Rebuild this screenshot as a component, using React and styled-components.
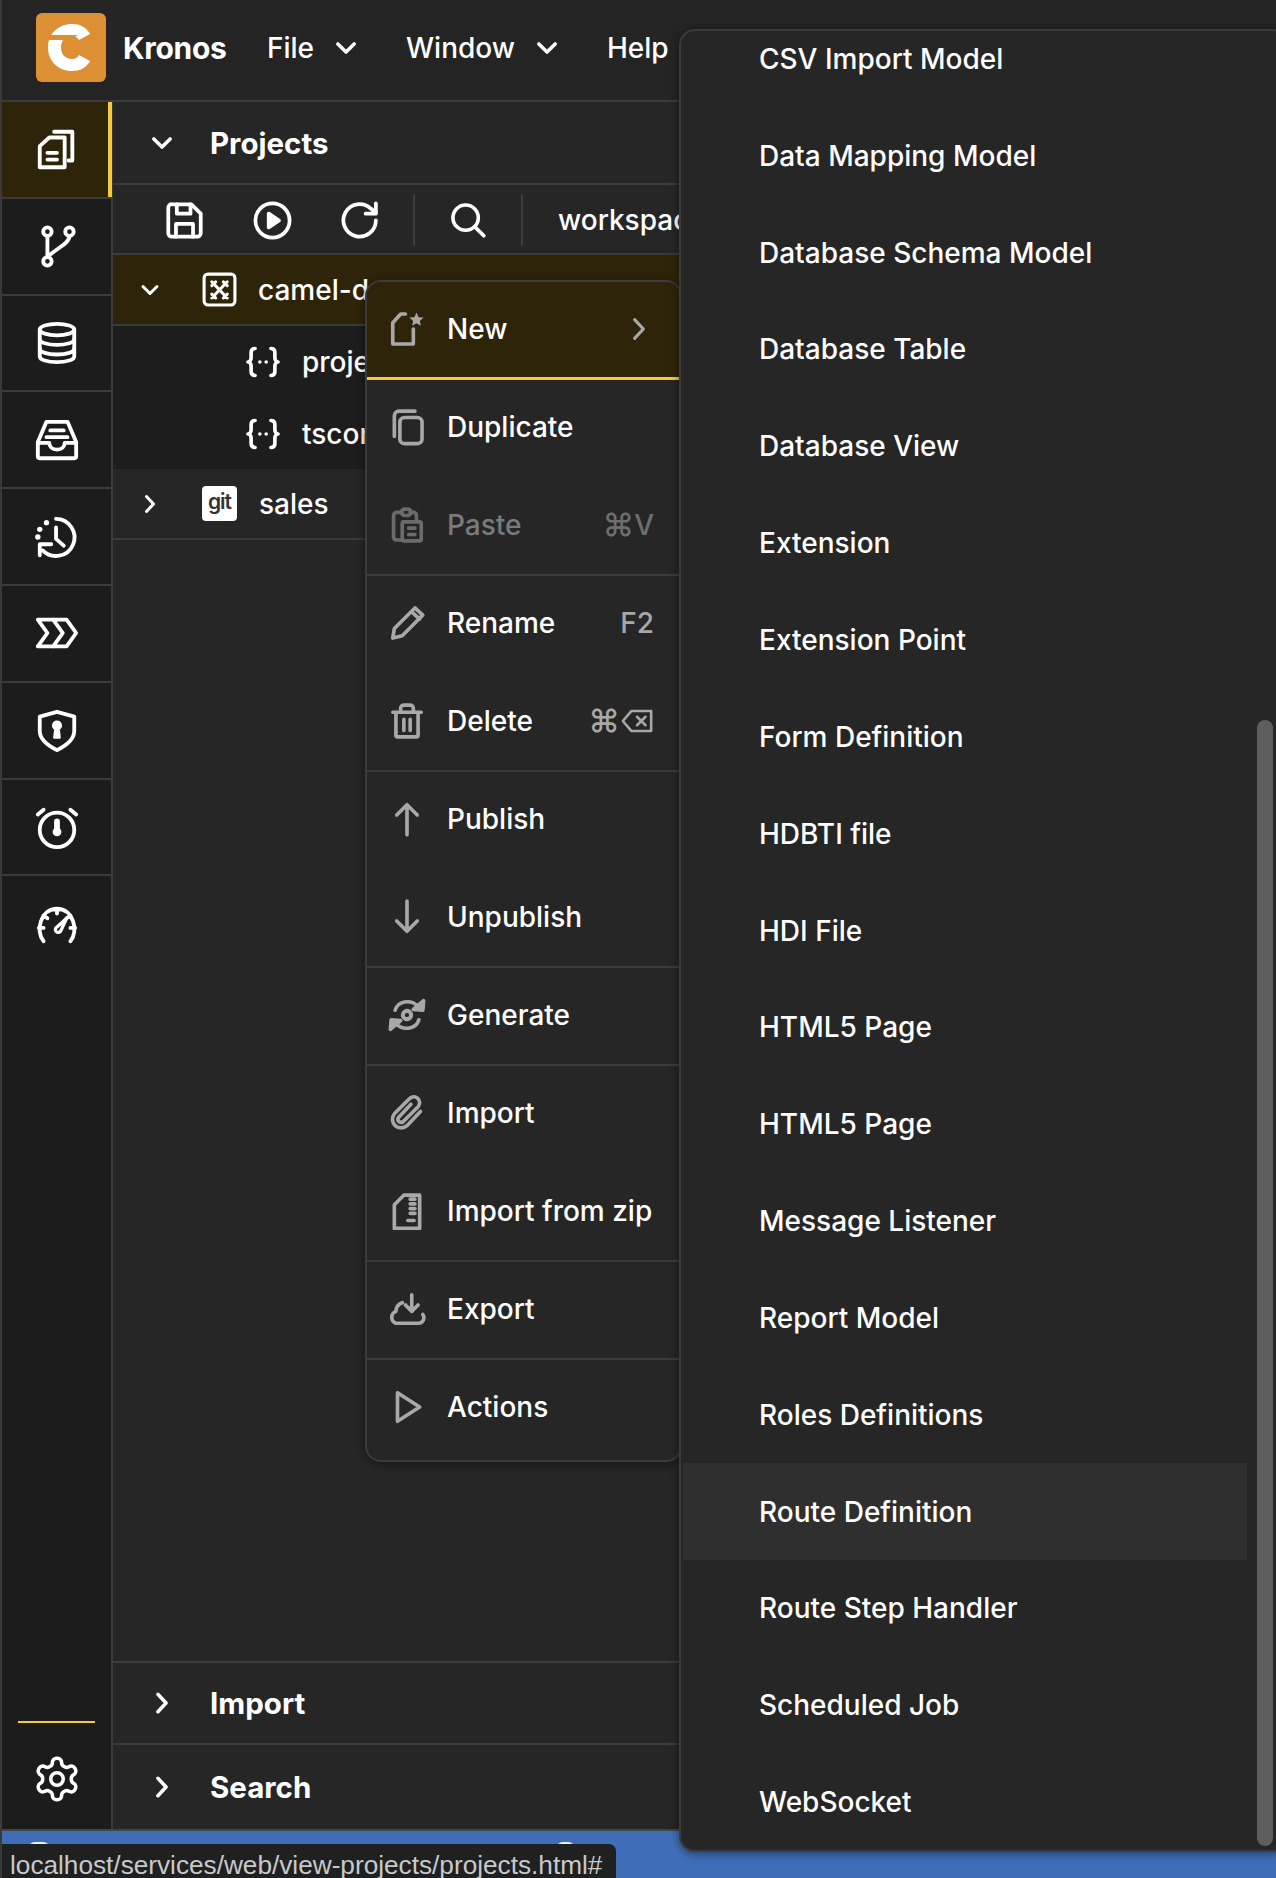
import React from 'react';
import styled, { createGlobalStyle } from 'styled-components';

const Global = createGlobalStyle`
  html, body { margin: 0; padding: 0; background: #262626; }
  * { box-sizing: border-box; }
`;

const FONT = `Inter, "Noto Sans", sans-serif`;
const BORDER = '#3b3b3b';
const YELLOW = '#f6c93f';
const ACTIVE = '#2e2409';

const Page = styled.div`
  position: relative;
  width: 1276px;
  height: 1878px;
  overflow: hidden;
  display: flex;
  flex-direction: column;
  background: #262626;
  color: #fff;
  font-family: ${FONT};
  font-size: 28px;
  font-weight: 500;
  border-left: 2px solid #3a3a3a;
`;
const Header = styled.header`
  height: 102px;
  flex: none;
  display: flex;
  align-items: center;
  padding: 0 0 5px 34px;
  background: #242424;
  border-bottom: 2px solid ${BORDER};
`;
const Logo = styled.svg`
  width: 70px;
  height: 69px;
  flex: none;
  margin-right: 17px;
`;
const Brand = styled.span`
  font-weight: 700;
  font-size: 30px;
  letter-spacing: -0.3px;
  width: 144px;
`;
const MenuLabel = styled.span`
  display: flex;
  align-items: center;
  width: ${p => p.$w}px;
  gap: ${p => p.$gap}px;
`;
const Body = styled.div`
  flex: 1;
  min-height: 0;
  display: flex;
`;
const Sidebar = styled.nav`
  width: 111px;
  flex: none;
  display: flex;
  flex-direction: column;
  background: #1c1c1c;
  border-right: 2px solid ${BORDER};
`;
const SideItem = styled.div`
  height: 96.8px;
  flex: none;
  display: flex;
  align-items: center;
  justify-content: center;
  border-bottom: ${p => (p.$last ? 'none' : `2px solid ${BORDER}`)};
  background: ${p => (p.$active ? ACTIVE : 'transparent')};
  box-shadow: ${p => (p.$active ? `inset -4px 0 0 ${YELLOW}` : 'none')};
  margin-right: ${p => (p.$active ? '-1px' : '0')};
`;
const SideSpacer = styled.div`
  flex: 1;
`;
const SideRule = styled.div`
  height: 2px;
  margin: 0 16px;
  background: ${YELLOW};
`;
const SideBottom = styled.div`
  height: 106px;
  flex: none;
  display: flex;
  align-items: center;
  justify-content: center;
  padding-top: 6px;
`;
const Panel = styled.main`
  flex: 1;
  min-width: 0;
  display: flex;
  flex-direction: column;
  background: #262626;
`;
const SectionHead = styled.div`
  height: ${p => p.$h}px;
  flex: none;
  display: flex;
  align-items: center;
  gap: 34px;
  padding-left: 35px;
  border-bottom: ${p => (p.$last ? 'none' : `2px solid ${BORDER}`)};
  border-top: ${p => (p.$first ? `2px solid ${BORDER}` : 'none')};
  font-weight: 700;
  font-size: 29.5px;
`;
const Toolbar = styled.div`
  height: 70px;
  flex: none;
  display: flex;
  align-items: center;
  padding: 2px 0 0 51px;
  border-bottom: 2px solid ${BORDER};
  white-space: nowrap;
  overflow: hidden;
`;
const ToolBtn = styled.span`
  display: flex;
  width: 40px;
  justify-content: center;
  margin-right: ${p => p.$mr || 48}px;
`;
const ToolDivider = styled.span`
  width: 2px;
  height: 52px;
  background: ${BORDER};
  margin-right: ${p => p.$mr}px;
`;
const Tree = styled.div`
  flex: 1;
  min-height: 0;
`;
const TreeRow = styled.div`
  height: ${p => p.$h}px;
  display: flex;
  align-items: center;
  padding-left: ${p => p.$pad}px;
  background: ${p => p.$bg};
  border-bottom: ${p => (p.$line ? `2px solid ${BORDER}` : 'none')};
  white-space: nowrap;
`;
const TreeChevron = styled.span`
  display: flex;
  width: 24px;
  justify-content: center;
  margin-right: 40px;
`;
const TreeIconBox = styled.span`
  display: flex;
  width: 34px;
  height: 34px;
  align-items: center;
  justify-content: center;
  margin-right: ${p => p.$mr || 22}px;
  flex: none;
`;
const GitBadge = styled.span`
  display: flex;
  width: 35px;
  height: 35px;
  border-radius: 4px;
  align-items: center;
  justify-content: center;
  background: #fff;
  color: #333;
  font-size: 21px;
  font-weight: 600;
  letter-spacing: -1px;
  margin-right: 22px;
  line-height: 1;
  padding-bottom: 4px;
`;
const Footer = styled.div`
  height: 49px;
  flex: none;
  display: flex;
  padding: 11px 0 0 26px;
  gap: 506px;
  background: #3f6eb9;
  border-top: 2px solid #444;
`;
const StatusDot = styled.span`
  width: ${p => p.$w}px;
  height: 14px;
  border-radius: 7px;
  background: #f0f0f0;
`;
const Tooltip = styled.div`
  position: absolute;
  left: -2px;
  bottom: 0;
  width: 616px;
  height: 34px;
  padding-left: 10px;
  background: #1e2022;
  border-top-right-radius: 7px;
  color: #c9c9c9;
  font-family: "Liberation Sans", sans-serif;
  font-size: 26.2px;
  font-weight: 400;
  line-height: 42px;
  white-space: nowrap;
`;
const ContextMenu = styled.div`
  position: absolute;
  left: 363px;
  top: 280px;
  width: 317px;
  height: 1182px;
  display: flex;
  flex-direction: column;
  background: #262626;
  border: 2px solid ${BORDER};
  border-radius: 16px;
  overflow: hidden;
  box-shadow: 0 2px 10px rgba(0, 0, 0, 0.45);
  z-index: 2;
`;
const MenuRow = styled.div`
  height: 98px;
  flex: none;
  display: flex;
  align-items: center;
  padding: 0 26px 2px 20px;
  background: ${p => (p.$active ? ACTIVE : 'transparent')};
  border-bottom: ${p =>
    p.$active ? `3px solid ${YELLOW}` : p.$sep ? `2px solid ${BORDER}` : '2px solid transparent'};
  color: ${p => (p.$muted ? '#7a7a7a' : '#fff')};
  white-space: nowrap;
`;
const MenuIcon = styled.span`
  display: flex;
  width: 40px;
  justify-content: center;
  margin-right: 20px;
  flex: none;
`;
const Shortcut = styled.span`
  margin-left: auto;
  display: flex;
  align-items: center;
  color: ${p => (p.$muted ? '#6e6e6e' : '#a8a8a8')};
`;
const CmdGlyph = styled.span`
  font-size: 32px;
  line-height: 1;
`;
const SubMenu = styled.div`
  position: absolute;
  left: 677px;
  top: 29px;
  width: 610px;
  height: 1823px;
  background: #262626;
  border: 2px solid ${BORDER};
  border-radius: 16px;
  overflow: hidden;
  box-shadow: 0 2px 10px rgba(0, 0, 0, 0.45);
  z-index: 3;
`;
const SubList = styled.div`
  margin: -20.5px 0 0 2px;
  width: 564px;
`;
const SubRow = styled.div`
  height: 96.85px;
  display: flex;
  align-items: center;
  padding-left: 76px;
  background: ${p => (p.$hover ? '#2f2f2f' : 'transparent')};
`;
const ScrollThumb = styled.div`
  position: absolute;
  left: 576px;
  top: 689px;
  width: 16px;
  height: 1126px;
  border-radius: 8px;
  background: #5e5e5e;
`;
const Svg = styled.svg`
  display: block;
  flex: none;
  fill: none;
  stroke: currentColor;
  stroke-width: ${p => p.$sw || 2};
  stroke-linecap: round;
  stroke-linejoin: round;
  color: ${p => p.$color || '#fff'};
`;

const Icon = ({ size = 46, color, sw, vb = '0 0 24 24', children }) => (
  <Svg width={size} height={size} viewBox={vb} $color={color} $sw={sw}>{children}</Svg>
);
const ChevDown = ({ size = 28, sw = 3 }) => <Icon size={size} sw={sw}><path d="M5 8.500l7 7 7-7" /></Icon>;
const ChevRight = ({ size = 28, sw = 3, color }) => <Icon size={size} sw={sw} color={color}><path d="M8.500 4.500l7 7.500-7 7.500" /></Icon>;

const IcFiles = () => <Icon><path d="M10.500 3H20V18H18" /><path d="M3 10.500L8 6H16V21.500H3z" /><path d="M7 14h5M7 17.500h5" /></Icon>;
const IcBranch = () => <Icon><circle cx="7" cy="4.500" r="2.200" /><circle cx="7" cy="20" r="2.200" /><circle cx="18.500" cy="4.500" r="2.200" /><path d="M7 6.700v11M18.500 6.700c0 4-6 6-11.500 11" /></Icon>;
const IcDb = () => <Icon sw={2}><ellipse cx="12" cy="5" rx="9" ry="3" /><path d="M3 5v14c0 1.700 4 3 9 3s9-1.300 9-3V5" /><path d="M3 10c0 1.700 4 3 9 3s9-1.300 9-3M3 15c0 1.700 4 3 9 3s9-1.300 9-3" /></Icon>;
const IcInbox = () => <Icon sw={2}><path d="M6.500 2.500h11L22 13v7.500a1 1 0 0 1-1 1H3a1 1 0 0 1-1-1V13z" /><path d="M2 13.500H8c0 2 1.500 3.500 4 3.500s4-1.500 4-3.500h6M8.500 7h7M6.500 10.500h11" /></Icon>;
const IcHistory = () => <Icon><path d="M11.500 2.500a9.700 9.700 0 1 1-7 16.500" /><path d="M11.500 7v6l4 3.500M3 21.500v-5.700h6" /><path d="M6.500 4.500h.01M3 8h.01M2 12h.01" strokeWidth="2.800" /></Icon>;
const IcChevrons = () => <Icon><path d="M2 5h15l5 7-5 7H2l5-7zM10 5l5 7-5 7" /></Icon>;
const IcShield = () => <Icon><path d="M12 2.500L21 5v7.500c0 4.500-4 7.500-9 10-5-2.500-9-5.500-9-10V5z" /><path d="M12 7.500a2.200 2.200 0 0 1 1 4.100l.5 4.400h-3l.5-4.400a2.200 2.200 0 0 1 1-4.100z" fill="#fff" strokeWidth="1" /></Icon>;
const IcAlarm = () => <Icon><circle cx="12" cy="13.500" r="9" /><path d="M2 5.500L5 3M22 5.500L19 3" /><path d="M12 9v5" strokeWidth="3" /><circle cx="12" cy="14.500" r="1.300" fill="#fff" /></Icon>;
const IcGauge = () => <Icon><path d="M5 20.500C.5 15 3.500 3.500 12 3.500s11.500 11.500 7 17M12 3.500V6M5 7l2 1.500M19 7l-2 1.500M2.500 13.500H5M21.500 13.500H19" /><path d="M17 8.500l-5 4.500a1.500 1.500 0 1 0 2 2z" strokeWidth="1.700" /></Icon>;
const IcGear = () => <Icon size={50} sw={1.700}><path d="M12.220 2h-.44a2 2 0 0 0-2 2v.180a2 2 0 0 1-1 1.730l-.430.250a2 2 0 0 1-2 0l-.150-.080a2 2 0 0 0-2.730.730l-.220.380a2 2 0 0 0 .730 2.730l.150.100a2 2 0 0 1 1 1.720v.510a2 2 0 0 1-1 1.740l-.150.090a2 2 0 0 0-.730 2.730l.220.380a2 2 0 0 0 2.730.730l.150-.080a2 2 0 0 1 2 0l.430.250a2 2 0 0 1 1 1.730V20a2 2 0 0 0 2 2h.440a2 2 0 0 0 2-2v-.180a2 2 0 0 1 1-1.730l.430-.250a2 2 0 0 1 2 0l.150.080a2 2 0 0 0 2.730-.730l.220-.390a2 2 0 0 0-.730-2.730l-.150-.080a2 2 0 0 1-1-1.740v-.500a2 2 0 0 1 1-1.740l.150-.090a2 2 0 0 0 .730-2.730l-.220-.380a2 2 0 0 0-2.730-.730l-.150.080a2 2 0 0 1-2 0l-.430-.250a2 2 0 0 1-1-1.730V4a2 2 0 0 0-2-2z" /><circle cx="12" cy="12" r="3" /></Icon>;
const IcSave = () => <Icon size={41} sw={2.200}><path d="M5 2.500h11L21.500 8v11.500a2 2 0 0 1-2 2h-15a2 2 0 0 1-2-2v-15a2 2 0 0 1 2.500-2z" /><path d="M7.500 2.500V8h8V2.500M7 21.500V14h10v7.500" /></Icon>;
const IcPlay = () => <Icon size={41} sw={2.200}><circle cx="12" cy="12" r="10" /><path d="M9.800 8l6 4-6 4z" fill="#fff" /></Icon>;
const IcRefresh = () => <Icon size={41} sw={2.200}><path d="M21 12a9.500 9.500 0 1 1-3-7l3 2.500" /><path d="M21 2v6h-6" /></Icon>;
const IcSearch = () => <Icon size={38} sw={2.300}><circle cx="10.500" cy="10.500" r="8" /><path d="M16.500 16.500L22 22" /></Icon>;
const IcCamel = () => <Icon size={37} sw={2}><rect x="2" y="2" width="20" height="20" rx="2.500" /><path d="M7 7l10 10.500M17 7L7 17.500M7 9.500l2.500-2.500M14.500 17.500l2.500-2.500M14.500 7L17 9.500M7 15l2.500 2.500" /></Icon>;
const IcJson = () => <Icon size={38} sw={2.300}><path d="M7 3.500c-2 0-2.500 1-2.500 2.500v3.500c0 1.500-1 2.500-2 2.500 1 0 2 1 2 2.500V18c0 1.500.5 2.500 2.500 2.500M17 3.500c2 0 2.500 1 2.500 2.500v3.500c0 1.500 1 2.500 2 2.500-1 0-2 1-2 2.500V18c0 1.500-.5 2.500-2.500 2.500M10 12h.01M14 12h.01" /></Icon>;

const G = '#a8a8a8';
const M = ({ children, color = G, sw = 2.300 }) => <Icon size={38} color={color} sw={sw}>{children}</Icon>;
const menuIcons = {
  new: <M><path d="M11 2.500H8L3 8v13.500h13V12" /><path d="M18 1.500l1.300 3 3.200.300-2.400 2.100.700 3.100-2.800-1.700-2.800 1.700.700-3.100-2.400-2.100 3.200-.300z" fill={G} stroke="none" /></M>,
  dup: <M><path d="M4 18V5a3 3 0 0 1 3-3h10" /><rect x="7.500" y="6" width="14" height="16.500" rx="3" /></M>,
  paste: <M color="#6b6b6b"><path d="M9 4H5.500a2 2 0 0 0-2 2v14a2 2 0 0 0 2 1.500H8M18 9V6a2 2 0 0 0-2-2h-2" /><rect x="8.500" y="2" width="6" height="4" rx="2" /><rect x="9" y="10" width="12" height="12" rx="1" /><path d="M13 14h4M13 18h4" /></M>,
  rename: <M><path d="M3 21.500l1-6L17 2.500 22 7 9 20z" /><path d="M15 5l5 4.500" /></M>,
  del: <M><path d="M3 6.500h18M8 6.500V4a2 2 0 0 1 2-2h4a2 2 0 0 1 2 2v2.500M5 6.500V21a1 1 0 0 0 1 1h12a1 1 0 0 0 1-1V6.500M10 11v7M14 11v7" /></M>,
  up: <M><path d="M12 22V3M5.500 9.500L12 3l6.500 6.500" /></M>,
  down: <M><path d="M12 2v19M5.500 14.500L12 21l6.500-6.500" /></M>,
  gen: <M><path d="M4.500 9C6 3.500 14 1.500 19 6.500M19.500 15c-1.500 5.500-9.500 7.500-14.500 2.500" /><path d="M22.500 3l-.5 6-6-.5zM1.500 21l.5-6 6 .5z" fill={G} /><circle cx="12" cy="12" r="2.600" fill="none" strokeWidth="2.600" strokeDasharray="2 .8" /></M>,
  imp: <M><path d="M20.500 11l-8.500 9a5.500 5.500 0 0 1-8-7.500L13.500 3a3.700 3.700 0 0 1 5.500 5L9.500 17.500a2 2 0 0 1-3-2.500l8-8.500" /></M>,
  zip: <M><path d="M10 2h10v21H4V8z" /><path d="M14 4.500h3M14 7.500h3M14 10.500h3M14 13.500h3M12.500 18h4" /></M>,
  exp: <M><path d="M9 8a6 6 0 0 0-4 5.500A4 4 0 0 0 5 21h14a3.500 3.500 0 0 0 3-5.500" /><path d="M15 3v10M11 9.500l4 4 4-4" /></M>,
  act: <M><path d="M6 3l14 9-14 9z" /></M>,
};

const sideIcons = [<IcFiles />, <IcBranch />, <IcDb />, <IcInbox />, <IcHistory />, <IcChevrons />, <IcShield />, <IcAlarm />, <IcGauge />];

const menuItems = [
  { k: 'new', t: 'New', active: true },
  { k: 'dup', t: 'Duplicate' },
  { k: 'paste', t: 'Paste', muted: true, sc: 'paste', sep: true },
  { k: 'rename', t: 'Rename', sc: 'F2' },
  { k: 'del', t: 'Delete', sc: 'del', sep: true },
  { k: 'up', t: 'Publish' },
  { k: 'down', t: 'Unpublish', sep: true },
  { k: 'gen', t: 'Generate', sep: true },
  { k: 'imp', t: 'Import' },
  { k: 'zip', t: 'Import from zip', sep: true },
  { k: 'exp', t: 'Export', sep: true },
  { k: 'act', t: 'Actions' },
];

const subItems = ['CSV Import Model', 'Data Mapping Model', 'Database Schema Model', 'Database Table', 'Database View', 'Extension', 'Extension Point', 'Form Definition', 'HDBTI file', 'HDI File', 'HTML5 Page', 'HTML5 Page', 'Message Listener', 'Report Model', 'Roles Definitions', 'Route Definition', 'Route Step Handler', 'Scheduled Job', 'WebSocket'];

const shortcutContent = sc => {
  if (sc === 'paste') return <><CmdGlyph>⌘</CmdGlyph>V</>;
  if (sc === 'del') {
    return (
      <>
        <CmdGlyph>⌘</CmdGlyph>
        <Icon size={34} color={G} sw={1.800}><path d="M8 5h14v14H8l-6-7zM12 9l6 6M18 9l-6 6" /></Icon>
      </>
    );
  }
  return sc;
};

export default function App() {
  return (
    <Page>
      <Global />
      <Header>
        <Logo viewBox="0 0 70 69">
          <rect width="70" height="69" rx="6" fill="#dc8f33" />
          <path d="M54 21 C 50 14 44 11 36 11 C 22 11 12 21 12 34.500 C 12 48 22 58 36 58 C 44 58 50 55 54 48 L 43 42 C 41 45 39 46 36 46 C 29 46 25 41 25 34.500 C 25 28 29 23 36 23 C 39 23 41 24 43 27 Z" fill="#fff" />
          <path d="M10 27 H 34 L 42 22 H 10 Z" fill="#dc8f33" />
        </Logo>
        <Brand>Kronos</Brand>
        <MenuLabel $w={139} $gap={18}>File <ChevDown /></MenuLabel>
        <MenuLabel $w={201} $gap={18}>Window <ChevDown /></MenuLabel>
        <MenuLabel $w={80} $gap={0}>Help</MenuLabel>
      </Header>
      <Body>
        <Sidebar>
          {sideIcons.map((ic, i) => (
            <SideItem key={i} $active={i === 0} $last={i === 8}>{ic}</SideItem>
          ))}
          <SideSpacer />
          <SideRule />
          <SideBottom><IcGear /></SideBottom>
        </Sidebar>
        <Panel>
          <SectionHead $h={83}><ChevDown /> <span>Projects</span></SectionHead>
          <Toolbar>
            <ToolBtn><IcSave /></ToolBtn>
            <ToolBtn><IcPlay /></ToolBtn>
            <ToolBtn $mr={33}><IcRefresh /></ToolBtn>
            <ToolDivider $mr={33} />
            <ToolBtn $mr={33}><IcSearch /></ToolBtn>
            <ToolDivider $mr={35} />
            <span>workspace</span>
          </Toolbar>
          <Tree>
            <TreeRow $h={71} $pad={25} $bg={ACTIVE} $line>
              <TreeChevron><ChevDown size={24} /></TreeChevron>
              <TreeIconBox><IcCamel /></TreeIconBox>
              camel-demo
            </TreeRow>
            <TreeRow $h={72} $pad={133} $bg="#1d1d1d">
              <TreeIconBox $mr={22}><IcJson /></TreeIconBox>
              project.json
            </TreeRow>
            <TreeRow $h={71} $pad={133} $bg="#1d1d1d">
              <TreeIconBox $mr={22}><IcJson /></TreeIconBox>
              tsconfig.json
            </TreeRow>
            <TreeRow $h={71} $pad={25} $bg="#262626" $line>
              <TreeChevron><ChevRight size={24} /></TreeChevron>
              <GitBadge>git</GitBadge>
              sales
            </TreeRow>
          </Tree>
          <SectionHead $h={84} $first><ChevRight /> <span>Import</span></SectionHead>
          <SectionHead $h={84} $last><ChevRight /> <span>Search</span></SectionHead>
        </Panel>
      </Body>
      <Footer>
        <StatusDot $w={22} />
        <StatusDot $w={19} />
      </Footer>
      <Tooltip>localhost/services/web/view-projects/projects.html#</Tooltip>

      <ContextMenu>
        {menuItems.map(m => (
          <MenuRow key={m.t} $active={m.active} $muted={m.muted} $sep={m.sep}>
            <MenuIcon>{menuIcons[m.k]}</MenuIcon>
            {m.t}
            {m.active && <Shortcut><ChevRight size={30} sw={2.500} color={G} /></Shortcut>}
            {m.sc && <Shortcut $muted={m.muted}>{shortcutContent(m.sc)}</Shortcut>}
          </MenuRow>
        ))}
      </ContextMenu>

      <SubMenu>
        <SubList>
          {subItems.map((s, i) => (
            <SubRow key={i} $hover={s === 'Route Definition'}>{s}</SubRow>
          ))}
        </SubList>
        <ScrollThumb />
      </SubMenu>
    </Page>
  );
}
